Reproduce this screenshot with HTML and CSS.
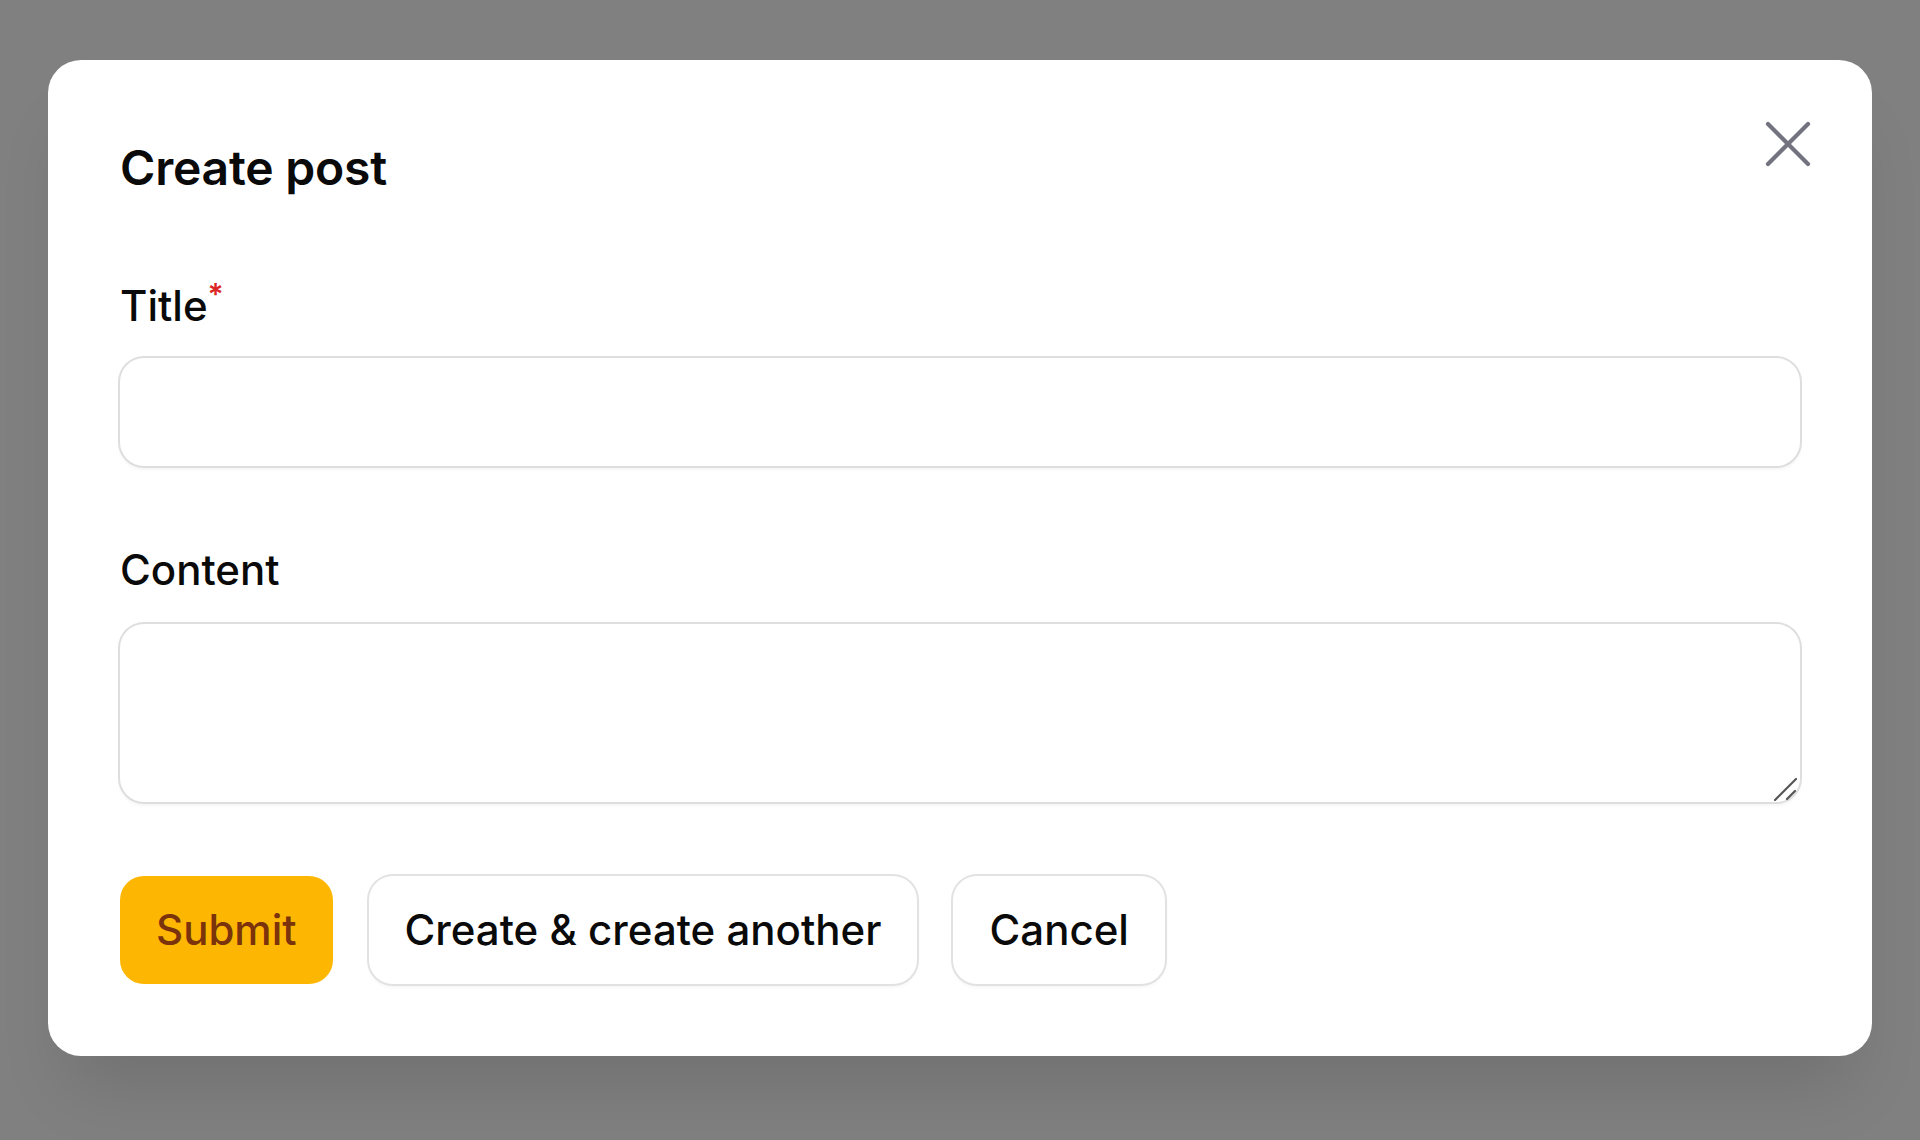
FILE: index.html
```html
<!DOCTYPE html>
<html lang="en">
<head>
<meta charset="utf-8">
<title>Create post</title>
<link rel="stylesheet" href="styles.css">
</head>
<body>
  <div class="modal">
    <button class="close" type="button" aria-label="Close">
      <svg viewBox="0 0 24 24" width="80" height="80" fill="none" stroke="currentColor" stroke-width="1.25" stroke-linecap="round" stroke-linejoin="round"><path d="M6 18 18 6M6 6l12 12"/></svg>
    </button>
    <h2 class="heading">Create post</h2>
    <div class="fields">
      <div class="field">
        <label class="label" for="title">Title<sup class="req">*</sup></label>
        <input class="control input" id="title" type="text">
      </div>
      <div class="field field-area">
        <label class="label" for="content">Content</label>
        <div class="textarea-wrap">
          <textarea class="control textarea" id="content"></textarea>
          <svg class="grip" viewBox="0 0 24 24" width="24" height="24" fill="none" stroke="#555" stroke-width="2.2" stroke-linecap="round"><path d="M2 23 23 2M14 22 22 14"/></svg>
        </div>
      </div>
    </div>
    <div class="actions">
      <button class="btn btn-primary" type="button">Submit</button>
      <button class="btn btn-outline" type="button">Create &amp; create another</button>
      <button class="btn btn-outline" type="button">Cancel</button>
    </div>
  </div>
</body>
</html>
```

FILE: styles.css
```css
* { box-sizing: border-box; }

html, body {
  margin: 0;
  height: 1140px;
  overflow: hidden;
}

body {
  background: #808080;
  padding: 60px 48px 0;
  font-family: Inter, "Noto Sans", "Liberation Sans", sans-serif;
  color: #0a0a0a;
}

.modal {
  position: relative;
  background: #ffffff;
  border-radius: 33px;
  padding: 72px 72px 72px;
  box-shadow: 0 50px 70px -20px rgba(0, 0, 0, 0.12);
}

.close {
  position: absolute;
  top: 44px;
  right: 44px;
  width: 80px;
  height: 80px;
  padding: 0;
  border: 0;
  background: transparent;
  color: #73737f;
  display: flex;
}

.heading {
  margin: 0;
  font-size: 48px;
  line-height: 72px;
  font-weight: 600;
  letter-spacing: -0.2px;
}

.fields {
  margin-top: 72px;
  display: flex;
  flex-direction: column;
  gap: 74px;
}

.field {
  display: flex;
  flex-direction: column;
  gap: 22px;
}

.field-area {
  gap: 24px;
}

.label {
  display: block;
  height: 60px;
  font-size: 42px;
  line-height: 60px;
  font-weight: 500;
}

.req {
  color: #dc2626;
  font-size: 30px;
  font-weight: 600;
  vertical-align: top;
  line-height: 30px;
  position: relative;
  top: 3px;
  margin-left: 0;
}

.control {
  display: block;
  width: 100%;
  border: 0;
  border-radius: 24px;
  background: #fff;
  box-shadow: 0 0 0 2px #dedede, 0 3px 4px rgba(0, 0, 0, 0.06);
  font: inherit;
  font-size: 42px;
  outline: none;
}

.input {
  height: 108px;
}

.textarea-wrap {
  position: relative;
}

.textarea {
  height: 178px;
  resize: none;
}

.grip {
  position: absolute;
  right: 3px;
  bottom: 1px;
}

.actions {
  margin-top: 74px;
  display: flex;
  gap: 36px;
}

.btn {
  height: 108px;
  padding: 0 36px;
  border: 0;
  border-radius: 24px;
  font-family: inherit;
  font-size: 42px;
  font-weight: 500;
  line-height: 60px;
  color: #0a0a0a;
}

.btn-primary {
  background: #fdb702;
  color: #7a330b;
}

.btn-outline {
  background: #fff;
  padding: 0 36px;
  box-shadow: 0 0 0 2px #e2e2e2, 0 3px 4px rgba(0, 0, 0, 0.05);
}
```
